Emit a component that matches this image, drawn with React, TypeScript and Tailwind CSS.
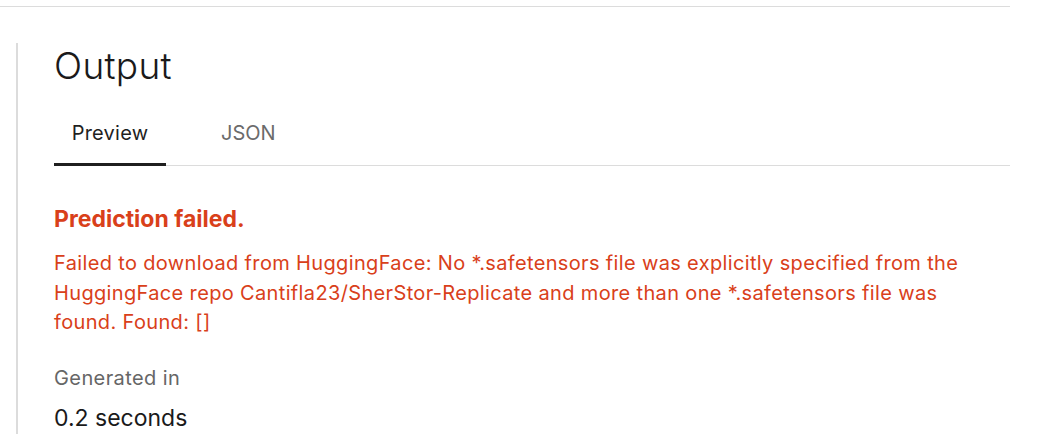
export default function App() {
  return (
    <div className="w-[1043px] h-[436px] overflow-hidden bg-white" style={{ fontFamily: 'Inter, "Noto Sans", sans-serif' }}>
      <div className="w-[1010px] mt-[6px] border-t border-[#dcdcdc]" />
      <div className="ml-[16px] mt-[36px] border-l-2 border-[#dcdcdc] pl-[36px] w-[994px]">
        <h2 className="pt-[1px] text-[37px] leading-[44px] font-light tracking-[0.3px] text-[#1a1a1a]">Output</h2>
        <div className="mt-[31px] flex border-b border-[#dcdcdc]">
          <div className="w-[112px] text-center text-[20px] leading-[28px] tracking-[0.25px] text-[#1f1f1f] pb-[16px] border-b-[3px] border-[#1f1f1f] -mb-[1px]">
            Preview
          </div>
          <div className="pl-[55px] text-[20px] leading-[28px] text-[#6b6b6b] pb-[16px]">JSON</div>
        </div>
        <div className="mt-[39px] text-[23px] leading-[28px] font-bold text-[#d9401a]">Prediction failed.</div>
        <p className="mt-[16px] w-[935px] text-[20px] leading-[29.5px] tracking-[0.35px] text-[#d9401a]">
          Failed to download from HuggingFace: No *.safetensors file was explicitly specified from the HuggingFace repo Cantifla23/SherStor-Replicate and more than one *.safetensors file was found. Found: []
        </p>
        <div className="mt-[27px] text-[20px] leading-[26px] tracking-[0.4px] text-[#666666]">Generated in</div>
        <div className="mt-[11px] text-[23px] leading-[32px] text-[#1a1a1a]">0.2 seconds</div>
      </div>
    </div>
  )
}
